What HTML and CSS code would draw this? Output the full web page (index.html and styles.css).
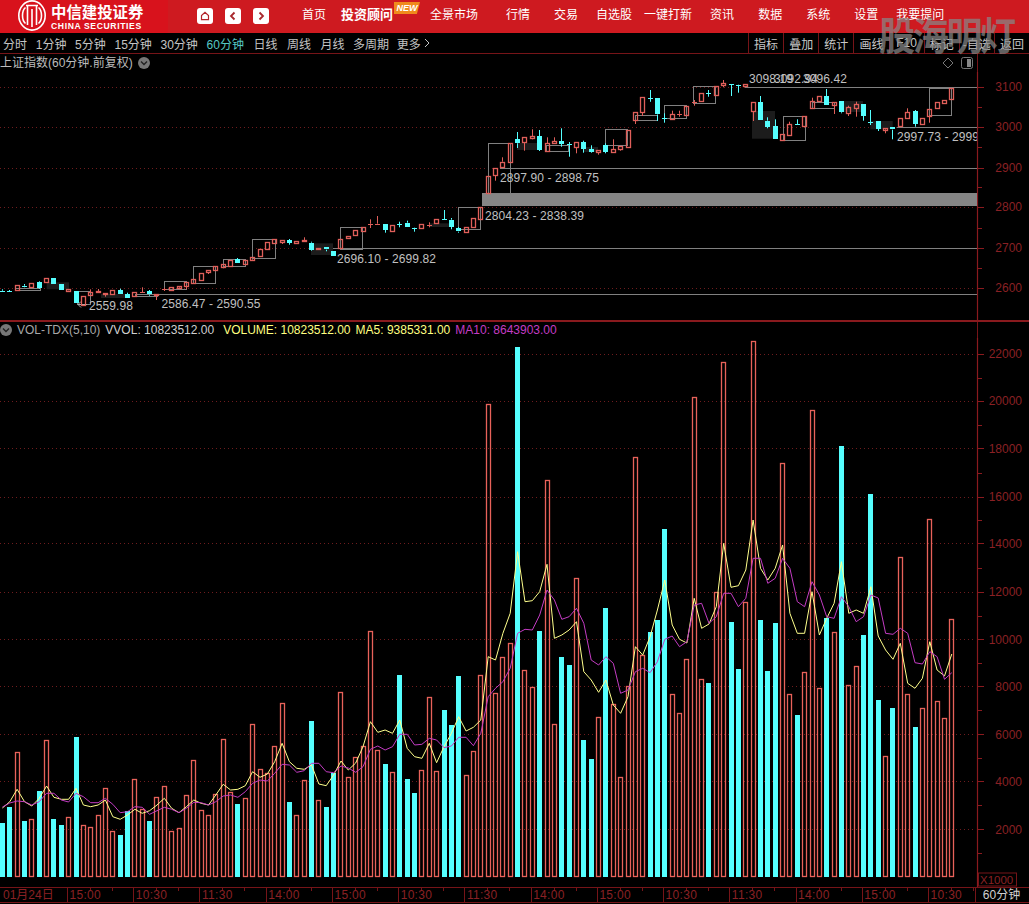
FILE: index.html
```html
<!DOCTYPE html>
<html lang="zh-CN">
<head>
<meta charset="utf-8">
<title>上证指数</title>
<link rel="stylesheet" href="styles.css">
</head>
<body>
<div class="page">
  <header class="topbar">
    <div class="brand">
      <svg class="brand-mark" viewBox="0 0 28 31" width="28" height="31" aria-hidden="true">
        <ellipse cx="14" cy="15.5" rx="13.2" ry="14.6" fill="none" stroke="#fff" stroke-width="1.6"/>
        <path d="M7.5 7.5C3.5 11 3.5 20 7.5 23.5M20.5 7.5C24.5 11 24.5 20 20.5 23.5" fill="none" stroke="#fff" stroke-width="1.6"/>
        <path d="M9.5 6V25M18.5 6V25M14 9V27M8 5.5H20" fill="none" stroke="#fff" stroke-width="1.6"/>
      </svg>
      <div class="brand-text">
        <div class="brand-cn">中信建投证券</div>
        <div class="brand-en">CHINA SECURITIES</div>
      </div>
    </div>
    <div class="ctrls">
      <button class="ctrl" type="button" aria-label="home"><svg viewBox="0 0 16 16" width="16" height="16"><path d="M4.5 7.5L8 4.3l3.5 3.2v4.2h-7z" fill="none" stroke="#b3242a" stroke-width="1.2"/></svg></button>
      <button class="ctrl" type="button" aria-label="back"><svg viewBox="0 0 16 16" width="16" height="16"><path d="M9.5 4.5L6 8l3.5 3.5" fill="none" stroke="#a8272c" stroke-width="1.8"/></svg></button>
      <button class="ctrl" type="button" aria-label="forward"><svg viewBox="0 0 16 16" width="16" height="16"><path d="M6.5 4.5L10 8l-3.5 3.5" fill="none" stroke="#a8272c" stroke-width="1.8"/></svg></button>
    </div>
    <nav class="nav">
      <a class="nav-first">首页</a>
      <a class="nav-strong">投资顾问<span class="badge">NEW</span></a>
      <a class="g37">全景市场</a>
      <a class="g28">行情</a>
      <a class="g24">交易</a>
      <a class="g18">自选股</a>
      <a class="g12">一键打新</a>
      <a class="g18">资讯</a>
      <a class="g24">数据</a>
      <a class="g24">系统</a>
      <a class="g24">设置</a>
      <a class="g18">我要提问</a>
    </nav>
  </header>

  <div class="toolbar">
    <div class="periods">
      <span>分时</span><span>1分钟</span><span>5分钟</span><span>15分钟</span><span>30分钟</span>
      <span class="active">60分钟</span><span class="wide">日线</span><span class="wide">周线</span><span class="wide">月线</span><span>多周期</span>
      <span class="more">更多<svg viewBox="0 0 8 10" width="8" height="10"><path d="M2 1l4 4-4 4" fill="none" stroke="#c4c4c4"/></svg></span>
    </div>
    <div class="tools">
      <span>指标</span><span>叠加</span><span>统计</span><span>画线</span><span>F10</span><span>标记</span><span>-自选</span><span>返回</span>
    </div>
  </div>

  <section class="panel">
    <div class="panel-head price-head">
      <div class="head-left">
        <span class="title">上证指数(60分钟.前复权)</span>
        <svg class="drop" viewBox="0 0 12 12" width="12" height="12"><circle cx="6" cy="6" r="6" fill="#777"/><path d="M3 4.6L6 7.6l3-3" fill="none" stroke="#222" stroke-width="1.4"/></svg>
      </div>
      <div class="head-right">
        <svg viewBox="0 0 12 12" width="12" height="12"><path d="M6 1l5 5-5 5-5-5z" fill="none" stroke="#777"/></svg>
        <svg viewBox="0 0 12 12" width="12" height="12"><rect x=".5" y=".5" width="11" height="11" rx="2" fill="none" stroke="#777"/><rect x="6" y="2" width="4" height="8" fill="#888"/></svg>
      </div>
    </div>
    <svg id="price" class="chart" viewBox="0 72 1029 248" width="1029" height="248">
      <g id="price-layer"></g>
      <g class="axis-text">
        <text x="1022" y="91">3100</text><text x="1022" y="131">3000</text><text x="1022" y="172">2900</text>
        <text x="1022" y="211">2800</text><text x="1022" y="252">2700</text><text x="1022" y="292">2600</text>
      </g>
      <g class="labels">
        <text x="89" y="310">2559.98</text>
        <text x="161.5" y="308">2586.47 - 2590.55</text>
        <text x="337" y="263">2696.10 - 2699.82</text>
        <text x="485" y="220">2804.23 - 2838.39</text>
        <text x="500" y="182">2897.90 - 2898.75</text>
        <text x="897" y="141" clip-path="url(#axis-clip)">2997.73 - 2999.82</text>
        <text x="749" y="83">3098.19</text>
        <text x="774" y="83">3092.94</text>
        <text x="803" y="83">3096.42</text>
      </g>
      <defs><clipPath id="axis-clip"><rect x="0" y="72" width="977" height="248"/></clipPath></defs>
    </svg>
  </section>

  <section class="panel vol-panel">
    <div class="panel-head vol-head">
      <svg class="drop" viewBox="0 0 12 12" width="12" height="12"><circle cx="6" cy="6" r="6" fill="#777"/><path d="M3 4.6L6 7.6l3-3" fill="none" stroke="#222" stroke-width="1.4"/></svg>
      <span class="vol-name">VOL-TDX(5,10)</span>
      <span class="vol-vol">VVOL: 10823512.00</span>
      <span class="vol-volume">VOLUME: 10823512.00</span>
      <span class="vol-ma5">MA5: 9385331.00</span>
      <span class="vol-ma10">MA10: 8643903.00</span>
    </div>
    <svg id="volume" class="chart" viewBox="0 338 1029 549" width="1029" height="549">
      <g id="volume-layer"></g>
      <g class="axis-text">
        <text x="1022" y="358">22000</text><text x="1022" y="405">20000</text><text x="1022" y="453">18000</text>
        <text x="1022" y="501">16000</text><text x="1022" y="548">14000</text><text x="1022" y="596">12000</text>
        <text x="1022" y="644">10000</text><text x="1022" y="691">8000</text><text x="1022" y="739">6000</text>
        <text x="1022" y="786">4000</text><text x="1022" y="834">2000</text>
      </g>
      <rect class="x-box" x="978.5" y="873" width="38" height="13"/>
      <text class="x-unit" x="980" y="884">X1000</text>
    </svg>
  </section>

  <footer class="timeaxis">
    <div class="t-first">01月24日</div>
    <div class="t-cell">15:00</div><div class="t-cell">10:30</div><div class="t-cell">11:30</div><div class="t-cell">14:00</div>
    <div class="t-cell">15:00</div><div class="t-cell">10:30</div><div class="t-cell">11:30</div><div class="t-cell">14:00</div>
    <div class="t-cell">15:00</div><div class="t-cell">10:30</div><div class="t-cell">11:30</div><div class="t-cell">14:00</div>
    <div class="t-cell">15:00</div><div class="t-cell t-last">10:30</div>
    <div class="t-period">60分钟</div>
  </footer>

  <div class="watermark">股海明灯</div>
</div>
<script src="chart.js"></script>
</body>
</html>
```

FILE: styles.css
```css
* { box-sizing: border-box; }
html, body { margin: 0; padding: 0; background: #000; }
body { font-family: "Liberation Sans", "Noto Sans CJK SC", sans-serif; font-size: 12px; color: #c4c4c4; }
.page { position: relative; width: 1029px; height: 904px; overflow: hidden; background: #000; }

.topbar { display: flex; align-items: center; height: 33px; background: #ce1a20; color: #fff; }
.brand { display: flex; align-items: center; width: 168px; height: 33px; padding-left: 18px; background: #d8121c; }
.brand-mark { flex: none; margin-top: -2px; }
.brand-text { margin-left: 5px; width: 94px; }
.brand-cn { font-size: 15.4px; line-height: 17px; font-weight: 700; white-space: nowrap; margin-top: 1px; }
.brand-en { font-size: 8.6px; line-height: 10px; font-weight: 700; letter-spacing: .62px; white-space: nowrap; }
.ctrls { display: flex; gap: 12px; margin-left: 29px; margin-top: -1px; }
.ctrl { width: 16px; height: 16px; padding: 0; border: 0; border-radius: 3px; background: #fff; display: block; }
.ctrl svg { display: block; }
.nav { display: flex; align-items: center; margin-left: 33px; margin-top: -3px; white-space: nowrap; }
.nav a { display: block; line-height: 16px; }
.nav-strong { position: relative; margin-left: 15px; font-size: 13px; font-weight: 700; }
.badge { position: absolute; left: 53px; top: -5px; width: 26px; height: 12px; background: #f08a1c; clip-path: polygon(0 0, 100% 0, 88% 100%, 0 100%); font-size: 9px; line-height: 12px; font-weight: 700; font-style: italic; text-align: center; color: #fff; }
.g12 { margin-left: 12px; } .g18 { margin-left: 18px; } .g24 { margin-left: 24px; } .g28 { margin-left: 28px; } .g37 { margin-left: 37px; }

.toolbar { display: flex; justify-content: space-between; height: 21px; border-bottom: 1px solid #761418; background: #000; }
.periods { display: flex; align-items: center; gap: 8.7px; padding-left: 3px; white-space: nowrap; }
.periods .active { color: #55c8c4; }
.periods .wide { margin-left: .8px; }
.more { display: flex; align-items: center; margin-left: -1px; gap: 2px; }
.tools { display: flex; width: 281px; }
.tools span { flex: 1; display: flex; align-items: center; justify-content: center; border-left: 1px solid #761418; color: #c8c8c8; white-space: nowrap; }

.panel-head { display: flex; align-items: center; width: 978px; border-right: 1px solid #761418; white-space: nowrap; }
.price-head { height: 18px; justify-content: space-between; padding-right: 4px; }
.head-left, .head-right { display: flex; align-items: center; gap: 5px; }
.head-right { gap: 7px; }
.title { color: #bcbcbc; margin-top: -3px; }
.drop { display: block; flex: none; }
.vol-panel { border-top: 2px solid #8a1a1e; }
.vol-head { height: 16px; }
.vol-name { margin-left: 5px; color: #a8a8a8; }
.vol-vol { margin-left: 5px; color: #d0d0d0; }
.vol-volume { margin-left: 9px; color: #ffff80; }
.vol-ma5 { margin-left: 5px; color: #ffff80; }
.vol-ma10 { margin-left: 5px; color: #c43cc4; }

.chart { display: block; }
.axis-text text { font-size: 12px; fill: #8a2024; text-anchor: end; }
.labels text { font-size: 12px; letter-spacing: .1px; fill: #c0c0c0; }
.x-box { fill: none; stroke: #761418; }
.x-unit { font-size: 11.5px; fill: #8a2024; }

.timeaxis { display: flex; height: 16px; border-top: 1px solid #761418; border-bottom: 1px solid #761418; color: #8a2024; white-space: nowrap; }
.t-first { width: 67px; padding-left: 3px; line-height: 14px; }
.t-cell { width: 66.24px; padding-left: 1.5px; line-height: 14px; letter-spacing: .3px; border-left: 1px solid #761418; background: linear-gradient(#761418, #761418) 22px 0 / 1px 3px no-repeat, linear-gradient(#761418, #761418) 44px 0 / 1px 3px no-repeat; }
.t-last { width: 47px; }
.t-period { flex: 1; text-align: center; padding-right: 2px; line-height: 14px; color: #d0d0d0; border-left: 1px solid #761418; }

.watermark { position: absolute; left: 879px; top: 12px; font-size: 36px; line-height: 50px; font-weight: 700; letter-spacing: -2.3px; color: rgba(135, 135, 135, .72); white-space: nowrap; pointer-events: none; transform: scaleY(1.08); }
```

FILE: chart.js
```js
(function () {
  var NS = 'http://www.w3.org/2000/svg';
  var RED = '#e05f5a', BAR = '#e8625a', CYAN = '#55ffff', GRID = '#6e1c1e', AXIS = '#8a1a1e', GRAY = '#808080';

  var vol = [823.3,807,752.3,821,819.3,791,740.3,819,825,817.3,737,825.3,827.3,815.3,788.3,831.3,835,811,779.3,809.3,
    821,797.3,786.3,831.3,828.3,795.3,760.3,810.3,815.3,794.3,739.3,792.3,804,798.3,724.3,769.3,773.3,746.3,703.3,802,
    815.3,780.3,721,800.3,807,773.3,692.3,777.3,757.3,746,631.3,750.3,764,772.3,675,779,793,770.3,697.3,771.3,
    710,725,676,775.3,751.3,675.3,404.3,693.3,657.3,643.3,347,670.3,687.3,631,480.3,724.3,657,665,578.3,740,
    759,717.3,608,704.3,777.3,686.3,457.3,655,632,620,529,694.3,713.3,659.3,397.3,679.3,683,591.7,362.3,622,
    669,602.3,341,620,671,623,463.3,694.3,715,672.3,410.3,688.3,618,632.3,446,685.3,666.3,635,494,700,
    756,708,557.3,694.3,727,708.3,519.3,701.3,718.3,619.3];

  var ma5 = [808,801.7,789.3,801.7,806,798.3,786,797.3,799.3,799.3,788.3,805,806.7,805,800,816.7,819.3,815,809.3,813.3,
    810.7,805,798.3,808.3,812.7,806.7,800,803.3,805,795,784.3,790,789.3,785.7,771.7,777.3,774,761.7,743.3,761.7,
    768.3,769.3,765,784,785.7,775,761,770,763,746.7,721.7,732.3,730,733.3,720,748.3,756.7,758.3,743.3,762.7,
    746.7,733.3,716.7,731,727.3,720,656.7,660,633.3,613.3,551.7,601.7,600.7,591.7,564.3,638.3,635,630,621.7,671.7,
    680,692.3,680,705,713.3,696.7,646.7,655,636.7,610,580,625,639.3,643,598.3,628.3,624,606.7,543.3,587.3,
    585.7,570,520,568.3,580,568.3,545,613.3,633.3,633.3,591.7,635,618.3,603.3,561.7,613.3,610,613.3,586.7,636,
    650,659.3,643.3,683.3,688.3,678.3,641.7,670,676,654];

  var ma10 = [807,803,801,801.7,805,801.7,793.3,793.3,800,802,793.3,796.7,802.7,802.7,798.3,804.3,812.7,811.7,806.7,807.3,
    814.3,810.7,807.3,809.3,812.7,808.3,802.3,802.7,805,801.7,796,795,797.3,791.7,783.3,780,781,773.3,764.3,765,
    772.3,770.7,763.3,763.3,771.7,772.7,766,768,772.3,766.7,749.3,746,750,746.7,734.3,734.3,745,744.3,738.3,740,
    747.7,746,737.3,737.3,745.7,733.3,696.7,688.3,681.7,668.3,633.3,629.3,630,615,590,600,619.3,616.7,608.3,623.3,
    660,665,656.7,663.3,693.3,690,671.7,668.3,672.7,661.7,639.3,636,646.7,641.7,605,603.3,623.3,616.7,593.3,593.3,
    606.7,598.3,558.3,558.3,583.3,578.3,558.3,568.3,601.7,606.7,581.7,595,616.7,618.3,596.7,606.7,621.7,616.7,595,598,
    633.3,634.3,628.3,633.3,662.7,664,651.7,656.7,679.3,672.7];

  var cyan = {};
  [0,1,3,5,7,8,10,16,17,20,32,39,42,44,45,52,54,55,56,60,61,62,70,73,76,77,79,80,82,88,89,90,96,99,100,
   103,104,105,108,112,114,117,118,119,121,124].forEach(function (i) { cyan[i] = 1; });

  // body top, body bottom, high, low (0 = no wick)
  var candles = [[290.5,290.5,289.3,292],[291,291,290,292],[285.3,290.3,0,0],[285.7,285.7,284,287.3],[282.7,287,0,0],
    [282.3,288,281.3,288.7],[278.3,282.7,0,0],[278.3,284,0,0],[284,290,0,0],[289,290.7,0,292],
    [290.7,302.7,0,0],[295.7,304.3,0,0],[292.3,295.7,289.3,0],[291,292.3,289,0],[293.3,294.7,0,296.7],
    [290.3,294,0,0],[290,294,288.7,0],[294.3,298,292.7,0],[292.3,296.7,0,0],[292.3,292.3,287.3,0],
    [291.3,294.7,290,295.7],[294.3,295.3,0,300],[289.3,289.3,287.7,291],[286.7,290,0,291],[285.7,287.3,0,289.3],
    [281.7,285.3,0,289.3],[279.3,283.3,0,0],[272.7,279.3,0,0],[270.3,272.7,0,274],[266.3,270.3,0,0],
    [264.3,267,0,268.3],[259.7,265.7,0,0],[259,262.7,258,0],[259.7,263.7,0,0],[256.7,259.3,0,261],
    [249.3,256.7,0,0],[242.3,249.3,0,0],[239,242.7,0,0],[240.3,242.3,0,244],[240,243,239,244.7],
    [241,243.3,0,0],[240.3,241.7,237.3,0],[242.7,249.3,241.7,250.7],[247.7,249,0,0],[247.3,249.7,0,251.3],
    [250.5,255,0,256],[239.3,248.3,0,0],[236.3,238.3,0,0],[230.3,235.3,0,0],[226.7,230.7,0,0],
    [223.7,223.7,219.3,228],[223.7,223.7,216,0],[223.7,230,0,232.7],[225.3,231,0,0],[224.3,224.3,221.7,227.3],
    [222.7,226.7,220.7,0],[227.7,227.7,0,231.7],[223.7,227.3,0,0],[224.7,224.7,222.3,227.3],[219.3,223.7,0,0],
    [219.3,219.3,210,0],[219.7,227,218,229.3],[228.3,231.7,227,232.7],[226.7,232,0,0],[218.3,227.7,0,0],
    [206.7,218.3,0,0],[175.7,192.7,0,0],[168.3,175,0,180.7],[161.7,167,157.3,0],[142.5,161.7,0,0],
    [139.3,143.3,132,148],[137.3,142.7,0,150.7],[136,138,129.3,139.3],[136,150,130,151],[143.3,151.3,137.3,0],
    [141,143.3,137.3,0],[141.3,144,128.3,146.7],[144.3,144.3,142,156.7],[142.3,147.7,0,153.3],[142,148.7,140.7,152.7],
    [149,152,145.3,152.7],[150.3,152,0,154.7],[145,152,143.3,153.3],[149.3,152.3,139.3,0],[146.3,149,0,150.7],
    [129.7,146.3,0,0],[112.2,120.5,0,124],[97.3,112.5,0,116],[98.2,98.2,90,101.8],[98.3,114.5,0,121],
    [118.3,118.3,113.3,122.7],[114.3,119.3,110.7,0],[113.5,113.5,110.7,116.7],[105.7,114.3,0,0],[102.3,102.3,100,105.7],
    [93.3,101.7,0,0],[93.3,93.3,90,96.7],[85.7,94.3,0,0],[83.3,85,80,87.3],[84,84,0,96],
    [84.7,84.7,0,92.7],[84.3,86.3,0,0],[102.3,111.7,0,121],[102.3,120,96,0],[120.7,126.7,117.3,128.3],
    [126,138.7,119.3,0],[134.3,140,0,0],[124,134.7,121.7,0],[124,124,119.3,0],[116.3,126,0,0],
    [101,107.7,97.7,0],[96.3,101.7,0,0],[96,105,89,0],[102.3,105.7,0,114],[101,112.3,0,113.3],
    [107.3,113.3,105.7,116],[104.3,108.3,101.7,116.7],[104,116,0,120.7],[122,122,110,125],[121,129,0,131],
    [127.7,129.3,0,133.3],[127.3,129.7,0,139.3],[118.3,126.7,0,0],[112.3,118.3,108.3,0],[111,124,110,126.7],
    [118.3,124.7,0,0],[108.7,115.3,0,122.7],[102,108.3,0,0],[99.7,102.7,0,0],[88.3,99.3,0,0]];

  var boxes = [[76.7,291,90,304.3],[135,294.3,157,296.7],[164.3,281.3,186.7,289.3],[193.3,266,215.7,283.3],
    [223.3,259.3,245.7,266.3],[252.3,239.3,275,258.7],[340.3,226.7,362.3,248.3],[458.3,206.7,480.3,228.3],
    [488.3,142.7,510.3,192.7],[546.3,145,568.3,151.3],[605.3,129.3,627.3,145.3],[635.3,115.3,657,120.7],
    [664.3,105.3,686.3,118.7],[693.3,85.7,715.7,102.3],[782.7,116.3,804.3,140],[811.7,101.7,833.3,107.7],
    [929.3,88.3,951.7,115.3],[15,288,40,290.3]];

  var shades = [[46.7,282.3,69,289.3],[101,294,127,298],[311,243.3,333,255],[430,223.3,452,227],[517,143,539,150],
    [583,147,598,152],[752,111,775,138.7],[840,101,863,112],[870.3,121,892.7,129.3]];

  var hlines = [[157,293.5],[333,248.3],[500,167.7],[897,126.7],[745,87.3]];

  function add(parent, tag, attrs) {
    var el = document.createElementNS(NS, tag);
    for (var k in attrs) el.setAttribute(k, attrs[k]);
    parent.appendChild(el);
    return el;
  }
  function crisp(v) { return Math.round(v) + 0.5; }
  function left(i) { return Math.round(2.4 + 7.36 * i - 2.5); }
  function hline(g, x1, x2, y, color, dash) {
    var a = { x1: x1, x2: x2, y1: crisp(y), y2: crisp(y), stroke: color };
    if (dash) a['stroke-dasharray'] = dash;
    add(g, 'line', a);
  }
  function axis(g, top, bottom, majors) {
    add(g, 'line', { x1: 977.5, x2: 977.5, y1: top, y2: bottom, stroke: AXIS, 'stroke-width': 1.2 });
    majors.forEach(function (y, n) {
      hline(g, 0, 973, y, GRID, '1 3');
      hline(g, 978, 984, y, AXIS);
      if (n < majors.length - 1) hline(g, 978, 982, (y + majors[n + 1]) / 2, AXIS);
    });
  }

  // price panel
  var p = document.getElementById('price-layer');
  axis(p, 72, 320, [87, 127, 167.5, 207, 248, 288]);
  shades.forEach(function (s) {
    add(p, 'rect', { x: s[0], y: s[1], width: s[2] - s[0], height: s[3] - s[1], fill: '#1c1c1c' });
  });
  hlines.forEach(function (l) { hline(p, l[0], 977, l[1], GRAY); });
  add(p, 'rect', { x: 482, y: 193, width: 495, height: 13, fill: '#858585' });
  boxes.forEach(function (b) {
    add(p, 'rect', { x: crisp(b[0]), y: crisp(b[1]), width: Math.round(b[2] - b[0]), height: Math.round(b[3] - b[1]), fill: 'none', stroke: GRAY });
  });
  add(p, 'path', { d: 'M87 304.5H78M81 301.5L78 304.5L81 307.5', fill: 'none', stroke: '#b0b0b0' });
  candles.forEach(function (c, i) {
    var L = left(i), mid = L + 2.5, color = cyan[i] ? CYAN : RED;
    var t = c[0], b = c[1];
    if (c[2]) add(p, 'line', { x1: mid, x2: mid, y1: c[2], y2: t, stroke: color });
    if (c[3]) add(p, 'line', { x1: mid, x2: mid, y1: b, y2: c[3], stroke: color });
    if (b - t < 1) {
      hline(p, L, L + 5, t, color);
    } else if (cyan[i]) {
      add(p, 'rect', { x: L, y: Math.round(t), width: 5, height: Math.max(2, Math.round(b - t)), fill: CYAN });
    } else {
      add(p, 'rect', { x: L + 0.5, y: crisp(t), width: 4, height: Math.max(1, Math.round(b - t)), fill: 'none', stroke: RED, 'stroke-width': 1.3 });
    }
  });

  // volume panel
  var v = document.getElementById('volume-layer');
  axis(v, 338, 887, [353.7, 401.3, 448.3, 496.7, 543.3, 591.7, 639.3, 686.3, 734.3, 781.3, 829.3]);
  hline(v, 978, 982, 853, AXIS);
  vol.forEach(function (top, i) {
    var L = left(i), base = 877;
    if (cyan[i]) {
      add(v, 'rect', { x: L, y: Math.round(top), width: 5, height: base - Math.round(top), fill: CYAN });
    } else {
      add(v, 'rect', { x: L + 0.5, y: crisp(top), width: 4, height: base - 1 - Math.round(top), fill: 'none', stroke: BAR, 'stroke-width': 1.3 });
    }
  });
  function line(values, color) {
    var pts = values.map(function (y, i) { return (2.4 + 7.36 * i).toFixed(1) + ',' + y; }).join(' ');
    add(v, 'polyline', { points: pts, fill: 'none', stroke: color, 'stroke-linejoin': 'round' });
  }
  line(ma5, '#ffff8c');
  line(ma10, '#c33cc3');
})();
```
